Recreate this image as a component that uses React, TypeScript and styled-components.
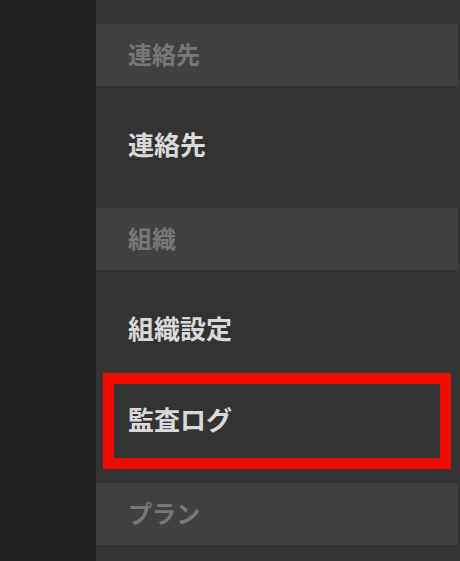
import React from "react";
import styled, { createGlobalStyle } from "styled-components";

const Global = createGlobalStyle`
  html, body { margin: 0; padding: 0; background: #333333; }
  body { font-family: "Noto Sans CJK JP", "Noto Sans", sans-serif; }
`;

const Shell = styled.div`
  display: flex;
  height: 561px;
  width: 460px;
  overflow: hidden;
`;

const Sidebar = styled.div`
  width: 96px;
  flex: none;
  background: #212121;
`;

const Main = styled.div`
  flex: 1;
  background: #333333;
  padding: 24px 2px 0 0;
  display: flex;
  flex-direction: column;
`;

const SectionHeader = styled.div`
  height: 62px;
  flex: none;
  box-sizing: border-box;
  background: #414141;
  display: flex;
  align-items: center;
  padding: 0 0 2px 32px;
  font-size: 24px;
  line-height: 1;
  font-weight: 700;
  color: #777777;
`;

const Group = styled.div`
  padding: 15px 0 16px;
  display: flex;
  flex-direction: column;
`;

const Item = styled.div<{ $highlight?: boolean }>`
  position: relative;
  box-sizing: border-box;
  height: 91px;
  display: flex;
  align-items: center;
  padding: 0 0 6px 32px;
  font-size: 26px;
  line-height: 1;
  font-weight: 700;
  color: #d9d9d9;
  ${(p) =>
    p.$highlight &&
    `
    &::after {
      content: "";
      position: absolute;
      top: -3px;
      bottom: -2px;
      left: 7px;
      right: 7px;
      border: 11px solid #ee0c00;
    }
  `}
`;

const sections = [
  { title: "連絡先", items: [{ label: "連絡先" }] },
  { title: "組織", items: [{ label: "組織設定" }, { label: "監査ログ", highlight: true }] },
  { title: "プラン", items: [] as { label: string; highlight?: boolean }[] },
];

export default function App() {
  return (
    <>
      <Global />
      <Shell>
        <Sidebar />
        <Main>
          {sections.map((s) => (
            <React.Fragment key={s.title}>
              <SectionHeader>{s.title}</SectionHeader>
              {s.items.length > 0 && (
                <Group>
                  {s.items.map((it) => (
                    <Item key={it.label} $highlight={it.highlight}>
                      {it.label}
                    </Item>
                  ))}
                </Group>
              )}
            </React.Fragment>
          ))}
        </Main>
      </Shell>
    </>
  );
}
